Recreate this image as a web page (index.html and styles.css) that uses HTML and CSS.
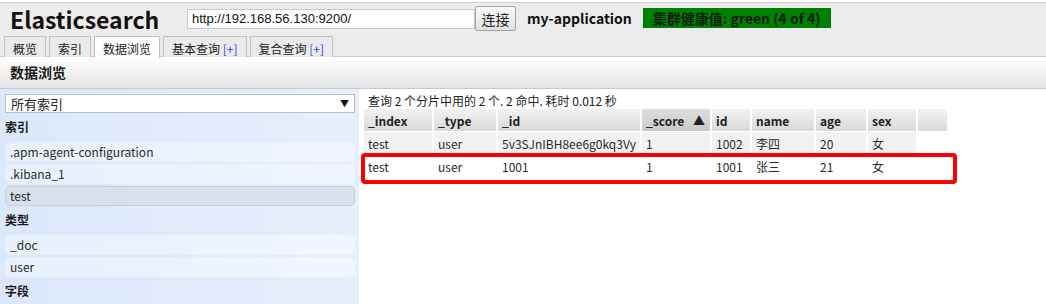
FILE: index.html
```html
<!DOCTYPE html>
<html lang="zh">
<head>
  <meta charset="UTF-8">
  <title>Elasticsearch</title>
  <link rel="stylesheet" href="styles.css">
</head>
<body>
  <div class="header">
    <div class="topbar">
      <h1 class="logo">Elasticsearch</h1>
      <input class="url" type="text" value="http://192.168.56.130:9200/">
      <button class="connect">连接</button>
      <span class="cluster">my-application</span>
      <span class="health">集群健康值: green (4 of 4)</span>
    </div>
    <ul class="tabs">
      <li class="tab">概览</li>
      <li class="tab">索引</li>
      <li class="tab active">数据浏览</li>
      <li class="tab">基本查询 <span class="plus">[+]</span></li>
      <li class="tab">复合查询 <span class="plus">[+]</span></li>
    </ul>
  </div>
  <div class="pagebar">数据浏览</div>

  <div class="main">
    <aside class="side">
      <div class="select"><span>所有索引</span><span class="arrow">▼</span></div>
      <h3 class="side__title">索引</h3>
      <ul class="side__list">
        <li class="side__item">.apm-agent-configuration</li>
        <li class="side__item">.kibana_1</li>
        <li class="side__item selected">test</li>
      </ul>
      <h3 class="side__title">类型</h3>
      <ul class="side__list">
        <li class="side__item">_doc</li>
        <li class="side__item">user</li>
      </ul>
      <h3 class="side__title">字段</h3>
      <ul class="side__list">
        <li class="side__item"></li>
      </ul>
    </aside>

    <section class="results">
      <p class="summary">查询 2 个分片中用的 2 个. 2 命中. 耗时 0.012 秒</p>
      <div class="table-wrap">
        <table class="table">
          <thead>
            <tr>
              <th class="c-index">_index</th>
              <th class="c-type">_type</th>
              <th class="c-id">_id</th>
              <th class="c-score sorted">_score <span class="sort">▲</span></th>
              <th class="c-uid">id</th>
              <th class="c-name">name</th>
              <th class="c-age">age</th>
              <th class="c-sex">sex</th>
              <th class="c-blank"></th>
            </tr>
          </thead>
          <tbody>
            <tr class="odd">
              <td>test</td><td>user</td><td>5v3SJnIBH8ee6g0kq3Vy</td><td>1</td>
              <td>1002</td><td>李四</td><td>20</td><td>女</td>
            </tr>
            <tr>
              <td>test</td><td>user</td><td>1001</td><td>1</td>
              <td>1001</td><td>张三</td><td>21</td><td>女</td>
            </tr>
          </tbody>
        </table>
        <div class="mark"></div>
      </div>
    </section>
  </div>
</body>
</html>
```

FILE: styles.css
```css
* { padding:0; margin:0; box-sizing:border-box; font-family:"Noto Sans CJK SC", "Noto Sans", sans-serif; }
ul,li { list-style:none; }

:root {
  --color-bg: #ececec;
  --color-plus: #2f3dff;
  --font-size: 12px;
}

body {
  width: 1046px;
  height: 304px;
  overflow: hidden;
  padding-top: 2px;
  background-color: #ffffff;
  font-size: var(--font-size);
  color: #222;
}

/* header */
.header {
  background-color: var(--color-bg);
  border-top: 1px solid #d2d2d2;
  border-bottom: 1px solid #c9c9c9;
  height: 55px;
}

.topbar {
  display: flex;
  align-items: center;
  height: 30px;
  padding-left: 10px;
}

.logo {
  font-size: 23px;
  font-weight: 700;
  color: #111;
  width: 177px;
  line-height: 30px;
  margin-top: 2px;
}

.url {
  width: 288px;
  height: 20px;
  border: 1px solid #c8c8c8;
  padding: 0 4px;
  font-family: "Liberation Sans", sans-serif;
  font-size: 13px;
  color: #111;
  margin-top: 1px;
}

.connect {
  width: 41px;
  height: 25px;
  border: 1px solid #a3a3a3;
  border-radius: 2px;
  background: linear-gradient(#fafafa, #e2e2e2);
  font-size: 14px;
  color: #222;
  margin-top: 1px;
}

.cluster {
  font-size: 14px;
  font-weight: 700;
  color: #111;
  margin-left: 11px;
  margin-top: -1px;
}

.health {
  margin-left: 11px;
  width: 188px;
  height: 20px;
  line-height: 20px;
  background-color: #008000;
  color: #0b1d0b;
  font-size: 14px;
  font-weight: 700;
  padding-left: 10px;
  margin-top: -1px;
}

.tabs {
  display: flex;
  padding-left: 4px;
  margin-top: 3px;
  gap: 3px;
}

.tab {
  height: 21px;
  line-height: 23px;
  padding: 0 8px;
  border: 1px solid #c2c2c2;
  border-bottom: none;
  background-color: #ebebeb;
  color: #222;
}

.tab.active {
  background-color: #fefefe;
  height: 22px;
}

.plus { color: var(--color-plus); }

.pagebar {
  height: 32px;
  line-height: 30px;
  padding-left: 10px;
  background: linear-gradient(#ffffff, #e4e4e4);
  border-bottom: 1px solid #c9c9c9;
  font-size: 14px;
  font-weight: 700;
  color: #1a1a1a;
}

/* layout */
.main {
  display: flex;
  height: 216px;
}

.side {
  width: 359px;
  padding: 5px 4px 0 5px;
  background: linear-gradient(to right, #dbe7fb, #e7effd);
}

.select {
  display: flex;
  justify-content: space-between;
  align-items: center;
  height: 19px;
  background-color: #fff;
  border: 1px solid #bfbfbf;
  padding: 0 5px;
  font-size: 13px;
  color: #222;
}

.arrow { font-size: 9px; color: #111; }

.side__title {
  font-size: 12px;
  font-weight: 700;
  color: #1a1a1a;
  line-height: 22px;
  margin: 3px 0 4px;
}

.side__list {
  display: flex;
  flex-direction: column;
  gap: 2px;
}

.side__item {
  height: 20px;
  line-height: 20px;
  padding-left: 5px;
  border-radius: 5px;
  background-color: rgba(255, 255, 255, 0.38);
  color: #2a2a2a;
}

.side__item.selected {
  background-color: #d8e1ec;
  border: 1px solid #c6d0dc;
  line-height: 18px;
  padding-left: 4px;
}

.side__list:last-child .side__item {
  border-top: 1px solid #b9cdee;
  margin-top: 2px;
}

.results {
  flex: 1;
  padding: 4px 0 0 5px;
}

.summary {
  line-height: 15px;
  padding-left: 4px;
  color: #222;
}

.table-wrap {
  position: relative;
}

.table {
  border-collapse: separate;
  border-spacing: 2px 1px;
  margin-left: -2px;
  table-layout: fixed;
}

.table th,
.table td {
  padding: 0 4px;
  text-align: left;
  white-space: nowrap;
  height: 22px;
}

.table th {
  background: linear-gradient(#f2f2f2, #d9d9d9);
  font-weight: 700;
  color: #222;
}

.table th.sorted {
  background: linear-gradient(#dedede, #c9c9c9);
}

.sort { font-size: 12px; margin-left: 6px; }

.table td { color: #2a2a2a; }
.table tr.odd td { background-color: #f2f2f2; }

.c-index { width: 68px; }
.c-type { width: 62px; }
.c-id { width: 142px; }
.c-score { width: 68px; }
.c-uid { width: 38px; }
.c-name { width: 62px; }
.c-age { width: 50px; }
.c-sex { width: 48px; }
.c-blank { width: 29px; }

/* red highlight box over the second row */
.mark {
  position: absolute;
  left: -3px;
  top: 45px;
  width: 596px;
  height: 31px;
  border: 4px solid #ff0000;
  border-radius: 4px;
}
```
